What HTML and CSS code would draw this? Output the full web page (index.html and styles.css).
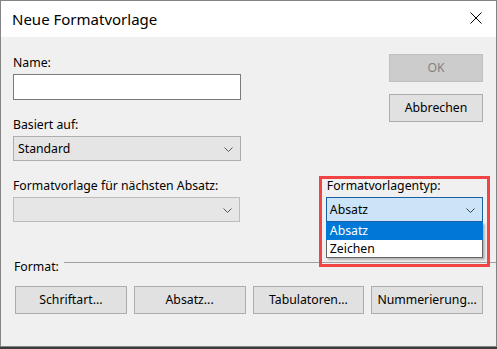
FILE: index.html
```html
<!DOCTYPE html>
<html>
	<head>
		<meta charset="utf-8">
		<title>Neue Formatvorlage</title>
		<link rel="stylesheet" href="styles.css">
	</head>
	<body>
		<div class="dialog">
			<div class="titlebar">
				<span class="title">Neue Formatvorlage</span>
				<svg class="close" width="12" height="12" viewBox="0 0 12 12">
					<path d="M0.5 0.5 L11.5 11.5 M11.5 0.5 L0.5 11.5" stroke="#000" stroke-width="1" fill="none"/>
				</svg>
			</div>
			<div class="content">
				<div class="top">
					<div class="col-left">
						<div class="label">Name:</div>
						<div class="textbox"></div>
						<div class="label gap">Basiert auf:</div>
						<div class="combo">
							<span>Standard</span>
							<svg class="chev" width="9" height="5" viewBox="0 0 9 5"><path d="M0.5 0.5 L4.5 4.5 L8.5 0.5" stroke="#555" fill="none"/></svg>
						</div>
					</div>
					<div class="col-right">
						<button class="btn btn-off">OK</button>
						<button class="btn">Abbrechen</button>
					</div>
				</div>

				<div class="row2">
					<div class="field-next">
						<div class="label">Formatvorlage für nächsten Absatz:</div>
						<div class="combo combo-off">
							<span></span>
							<svg class="chev" width="9" height="5" viewBox="0 0 9 5"><path d="M0.5 0.5 L4.5 4.5 L8.5 0.5" stroke="#555" fill="none"/></svg>
						</div>
					</div>
					<div class="field-type">
						<div class="label">Formatvorlagentyp:</div>
						<div class="combo combo-focus">
							<span>Absatz</span>
							<svg class="chev" width="9" height="5" viewBox="0 0 9 5"><path d="M0.5 0.5 L4.5 4.5 L8.5 0.5" stroke="#444" fill="none"/></svg>
						</div>
						<ul class="droplist">
							<li class="sel">Absatz</li>
							<li>Zeichen</li>
						</ul>
					</div>
				</div>

				<div class="format">
					<span class="label">Format:</span>
					<div class="rule"></div>
				</div>

				<div class="buttons">
					<button class="btn btn-wide">Schriftart...</button>
					<button class="btn btn-wide">Absatz...</button>
					<button class="btn btn-wide">Tabulatoren...</button>
					<button class="btn btn-wide">Nummerierung...</button>
				</div>
			</div>
		</div>
	</body>
</html>
```

FILE: styles.css
```css
* {
	margin: 0;
	padding: 0;
	box-sizing: border-box;
}

html {
	background-color: #3c3c3c;
}

body {
	margin: 0;
	font-family: "Noto Sans", "Liberation Sans", sans-serif;
	font-size: 12.25px;
	line-height: 16px;
	color: #000;
}

ul {
	list-style: none;
}

.dialog {
	width: 497px;
	height: 347px;
	border: 1px solid #858585;
	background-color: #f0f0f0;
	display: flex;
	flex-direction: column;
}

.titlebar {
	height: 36px;
	background-color: #fff;
	display: flex;
	align-items: flex-start;
	justify-content: space-between;
	padding: 10px 14px 0 11px;
}

.title {
	font-size: 15px;
	line-height: 17px;
}

.close {
	margin-top: 1px;
}

.content {
	padding: 18px 13px 0 12px;
}

.top {
	display: flex;
	justify-content: space-between;
}

.col-left {
	width: 228px;
}

.col-right {
	display: flex;
	flex-direction: column;
	gap: 12px;
	margin-top: -1px;
}

.label {
	margin-bottom: 3px;
	white-space: nowrap;
}

.label.gap {
	margin-top: 17px;
}

.textbox {
	height: 26px;
	background-color: #fff;
	border: 1px solid #7a7a7a;
}

.combo {
	height: 25px;
	background-color: #e5e5e5;
	border: 1px solid #adadad;
	display: flex;
	align-items: center;
	justify-content: space-between;
	padding: 0 7px 0 4px;
}

.combo .chev {
	margin-top: 1px;
}

.combo-off {
	background-color: #e6e6e6;
	border-color: #bcbcbc;
}

.combo-focus {
	background-color: #cce4f7;
	border-color: #1a5ea4;
	padding-left: 3px;
}

.btn {
	font-family: inherit;
	font-size: 12.25px;
	line-height: 16px;
	color: #000;
	height: 28px;
	width: 94px;
	background-color: #e1e1e1;
	border: 1px solid #adadad;
}

.btn-off {
	background-color: #cccccc;
	border-color: #bfbfbf;
	color: #838383;
}

.row2 {
	display: flex;
	margin-top: 17px;
}

.field-next {
	width: 228px;
}

.field-type {
	width: 158px;
	margin-left: 86px;
	position: relative;
}

.field-type .label {
	padding-left: 1px;
}

/* rote Markierung */
.field-type::before {
	content: "";
	position: absolute;
	left: -7px;
	right: -7px;
	top: -2px;
	bottom: -45px;
	border: 3px solid #f24444;
}

.droplist {
	position: absolute;
	left: 0;
	right: 0;
	top: 44px;
	background-color: #fff;
	border: 1px solid #646464;
	border-top: none;
	box-shadow: 2px 2px 2px rgba(0, 0, 0, 0.25);
}

.droplist li {
	height: 17px;
	line-height: 17px;
	padding-left: 3px;
}

.droplist li.sel {
	height: 18px;
	line-height: 18px;
	background-color: #0078d7;
	color: #fff;
	margin: 0 -1px;
	padding-left: 4px;
}

.format {
	display: flex;
	align-items: flex-start;
	margin-top: 37px;
	margin-right: -13px;
	padding-left: 1px;
}

.format .label {
	margin-bottom: 0;
}

.rule {
	flex: 1;
	height: 1px;
	background-color: #a0a0a0;
	margin-top: 3px;
	margin-left: 5px;
}

.buttons {
	display: flex;
	gap: 7px;
	margin-top: 11px;
	padding-left: 2px;
}

.btn-wide {
	width: 112px;
}
```
